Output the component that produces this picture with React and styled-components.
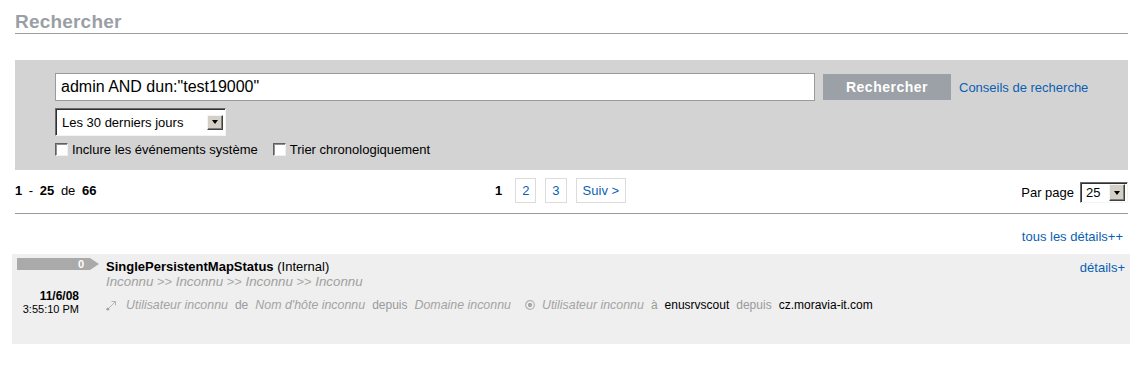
import React from 'react';
import styled, { createGlobalStyle } from 'styled-components';

const Global = createGlobalStyle`
  html, body { margin: 0; padding: 0; background: #fff; }
  body {
    font-family: "Liberation Sans", Arial, Helvetica, sans-serif;
    color: #000;
  }
`;

const BLUE = '#0a5fb4';

const Page = styled.div`
  padding: 0 13px 0 15px;
`;

const Title = styled.h1`
  margin: 0;
  padding-top: 11px;
  font-size: 19px;
  line-height: 22px;
  font-weight: bold;
  color: #9a9fa5;
  letter-spacing: 0.2px;
  border-bottom: 1px solid #9a9fa5;
`;

const SearchPanel = styled.div`
  margin-top: 26px;
  height: 110px;
  box-sizing: border-box;
  padding: 13px 0 0 40px;
  background: #d3d3d3;
`;

const QueryRow = styled.div`
  display: flex;
  align-items: center;
`;

const QueryInput = styled.input`
  width: 760px;
  height: 28px;
  box-sizing: border-box;
  border: 1px solid #9a9a9a;
  padding: 0 5px;
  margin: 0;
  font-family: inherit;
  font-size: 16px;
  color: #000;
  background: #fff;
  outline: none;
`;

const SearchButton = styled.button`
  margin-left: 8px;
  width: 128px;
  height: 26px;
  border: none;
  padding: 0;
  background: #9ba1a7;
  color: #fff;
  font-family: inherit;
  font-weight: bold;
  font-size: 14px;
  letter-spacing: 0.5px;
`;

const Link = styled.a`
  color: ${BLUE};
  text-decoration: none;
  font-size: 13px;
  cursor: pointer;
`;

const HelpLink = styled(Link)`
  margin-left: 8px;
`;

const SelectBox = styled.div`
  width: ${(p) => p.$w}px;
  height: ${(p) => p.$h}px;
  box-sizing: border-box;
  display: flex;
  align-items: center;
  justify-content: space-between;
  background: #fff;
  border: 1px solid;
  border-color: #6a6a6a #f4f4f4 #f4f4f4 #6a6a6a;
  box-shadow: inset 1px 1px 0 #303030;
  padding: 0 2px 0 ${(p) => p.$pl}px;
  font-size: 13px;
`;

const SelectArrow = styled.span`
  width: 16px;
  height: ${(p) => p.$h}px;
  box-sizing: border-box;
  background: #d4d0c8;
  border: 1px solid;
  border-color: #f4f4f4 #404040 #404040 #f4f4f4;
  box-shadow: inset -1px -1px 0 #808080;
  display: flex;
  align-items: center;
  justify-content: center;
  &::after {
    content: '';
    border-left: 3.5px solid transparent;
    border-right: 3.5px solid transparent;
    border-top: 4px solid #000;
  }
`;

const RangeRow = styled.div`
  margin-top: 7px;
`;

const CheckRow = styled.div`
  margin-top: 6px;
  display: flex;
  align-items: center;
  font-size: 13px;
  line-height: 15px;
`;

const CheckBox = styled.span`
  width: 13px;
  height: 13px;
  box-sizing: border-box;
  background: #fff;
  border: 1px solid;
  border-color: #606060 #f0f0f0 #f0f0f0 #606060;
  box-shadow: inset 1px 1px 0 #909090;
  margin-left: ${(p) => p.$ml || 0}px;
`;

const CheckLabel = styled.span`
  margin-left: 4px;
`;

const PagerRow = styled.div`
  display: grid;
  grid-template-columns: 1fr auto 1fr;
  align-items: center;
  padding: 8px 0 10px;
  border-bottom: 1px solid #9a9a9a;
  font-size: 13px;
  line-height: 16px;
`;

const Count = styled.div`
  word-spacing: 3px;
  b { font-weight: bold; }
`;

const Pages = styled.div`
  display: flex;
  align-items: center;
  gap: 8px;
  margin-right: 26px;
`;

const PageBox = styled.a`
  height: 25px;
  box-sizing: border-box;
  display: inline-flex;
  align-items: center;
  padding: 0 ${(p) => (p.$current ? 4 : 6)}px;
  margin-right: ${(p) => (p.$current ? 0 : 1)}px;
  border: 1px solid ${(p) => (p.$current ? 'transparent' : '#dcdcdc')};
  color: ${(p) => (p.$current ? '#000' : BLUE)};
  font-weight: ${(p) => (p.$current ? 'bold' : 'normal')};
  text-decoration: none;
  font-size: 13px;
`;

const PerPage = styled.div`
  display: flex;
  align-items: center;
  justify-content: flex-end;
  gap: 6px;
  margin-top: 4px;
`;

const AllDetails = styled.div`
  margin-top: 14px;
  text-align: right;
  padding-right: 5px;
  line-height: 16px;
`;

const EventRow = styled.div`
  margin: 9px -2px 0 -3px;
  height: 90px;
  box-sizing: border-box;
  padding: 4px 5px;
  background: #efefef;
  display: grid;
  grid-template-columns: 89px 1fr auto;
`;

const LeftCol = styled.div`
  display: flex;
  flex-direction: column;
`;

const Bar = styled.div`
  display: flex;
  height: 12px;
`;

const BarBody = styled.div`
  width: 73px;
  box-sizing: border-box;
  padding-right: 6px;
  background: #aaaaaa;
  color: #fff;
  font-weight: bold;
  font-size: 11px;
  line-height: 12px;
  text-align: right;
`;

const BarTip = styled.div`
  width: 0;
  height: 0;
  border-top: 6px solid transparent;
  border-bottom: 6px solid transparent;
  border-left: 9px solid #aaaaaa;
`;

const DateBlock = styled.div`
  margin-top: 20px;
  padding-right: 27px;
  text-align: right;
`;

const DateLine = styled.div`
  font-weight: bold;
  font-size: 12px;
  line-height: 13px;
`;

const TimeLine = styled.div`
  font-size: 11px;
  line-height: 12px;
`;

const Content = styled.div`
  display: flex;
  flex-direction: column;
`;

const EventTitle = styled.div`
  font-size: 13px;
  line-height: 17px;
  b { font-weight: bold; }
`;

const PathLine = styled.div`
  font-size: 13px;
  line-height: 14px;
  color: #aaaaaa;
  i { font-style: italic; color: #a0a0a0; font-size: 13.3px; }
`;

const InfoLine = styled.div`
  margin-top: 8px;
  display: flex;
  align-items: center;
  gap: 7px;
  font-size: 12px;
  line-height: 16px;
`;

const Unknown = styled.span`
  font-style: italic;
  font-size: 12.4px;
  color: #a3a3a3;
`;

const Word = styled.span`
  color: #9a9a9a;
`;

const Value = styled.span`
  color: #000;
`;

const IconWrap = styled.span`
  display: inline-flex;
  margin-left: ${(p) => p.$ml || 0}px;
  margin-right: ${(p) => p.$mr || 0}px;
`;

const DetailsLink = styled(Link)`
  line-height: 17px;
`;

const ArrowIcon = () => (
  <svg width="11" height="11" viewBox="0 0 11 11">
    <line x1="2" y1="9" x2="9.5" y2="1.5" stroke="#b4b4b4" strokeWidth="1" />
    <polyline points="5.5,1.5 9.5,1.5 9.5,5.5" fill="none" stroke="#b4b4b4" strokeWidth="1" />
    <circle cx="1.8" cy="9.2" r="1.4" fill="#a0a0a0" />
  </svg>
);

const TargetIcon = () => (
  <svg width="10" height="10" viewBox="0 0 10 10">
    <circle cx="5" cy="5" r="4.3" fill="#f4f4f4" stroke="#b0b0b0" strokeWidth="1.2" />
    <circle cx="5" cy="5" r="2.2" fill="#a8a8a8" />
  </svg>
);

export default function App() {
  return (
    <Page>
      <Global />
      <Title>Rechercher</Title>

      <SearchPanel>
        <QueryRow>
          <QueryInput readOnly defaultValue='admin AND dun:"test19000"' />
          <SearchButton>Rechercher</SearchButton>
          <HelpLink>Conseils de recherche</HelpLink>
        </QueryRow>
        <RangeRow>
          <SelectBox $w={171} $h={28} $pl={6}>
            <span>Les 30 derniers jours</span>
            <SelectArrow $h={15} />
          </SelectBox>
        </RangeRow>
        <CheckRow>
          <CheckBox />
          <CheckLabel>Inclure les événements système</CheckLabel>
          <CheckBox $ml={15} />
          <CheckLabel>Trier chronologiquement</CheckLabel>
        </CheckRow>
      </SearchPanel>

      <PagerRow>
        <Count>
          <b>1</b> - <b>25</b> de <b>66</b>
        </Count>
        <Pages>
          <PageBox $current>1</PageBox>
          <PageBox>2</PageBox>
          <PageBox>3</PageBox>
          <PageBox>Suiv &gt;</PageBox>
        </Pages>
        <PerPage>
          <span>Par page</span>
          <SelectBox $w={48} $h={21} $pl={5}>
            <span>25</span>
            <SelectArrow $h={17} />
          </SelectBox>
        </PerPage>
      </PagerRow>

      <AllDetails>
        <Link>tous les détails++</Link>
      </AllDetails>

      <EventRow>
        <LeftCol>
          <Bar>
            <BarBody>0</BarBody>
            <BarTip />
          </Bar>
          <DateBlock>
            <DateLine>11/6/08</DateLine>
            <TimeLine>3:55:10 PM</TimeLine>
          </DateBlock>
        </LeftCol>
        <Content>
          <EventTitle>
            <b>SinglePersistentMapStatus</b> (Internal)
          </EventTitle>
          <PathLine>
            <i>Inconnu</i> &gt;&gt; <i>Inconnu</i> &gt;&gt; <i>Inconnu</i> &gt;&gt; <i>Inconnu</i>
          </PathLine>
          <InfoLine>
            <IconWrap $mr={2}><ArrowIcon /></IconWrap>
            <Unknown>Utilisateur inconnu</Unknown>
            <Word>de</Word>
            <Unknown>Nom d'hôte inconnu</Unknown>
            <Word>depuis</Word>
            <Unknown>Domaine inconnu</Unknown>
            <IconWrap $ml={7}><TargetIcon /></IconWrap>
            <Unknown>Utilisateur inconnu</Unknown>
            <Word>à</Word>
            <Value>enusrvscout</Value>
            <Word>depuis</Word>
            <Value>cz.moravia-it.com</Value>
          </InfoLine>
        </Content>
        <div>
          <DetailsLink>détails+</DetailsLink>
        </div>
      </EventRow>
    </Page>
  );
}
